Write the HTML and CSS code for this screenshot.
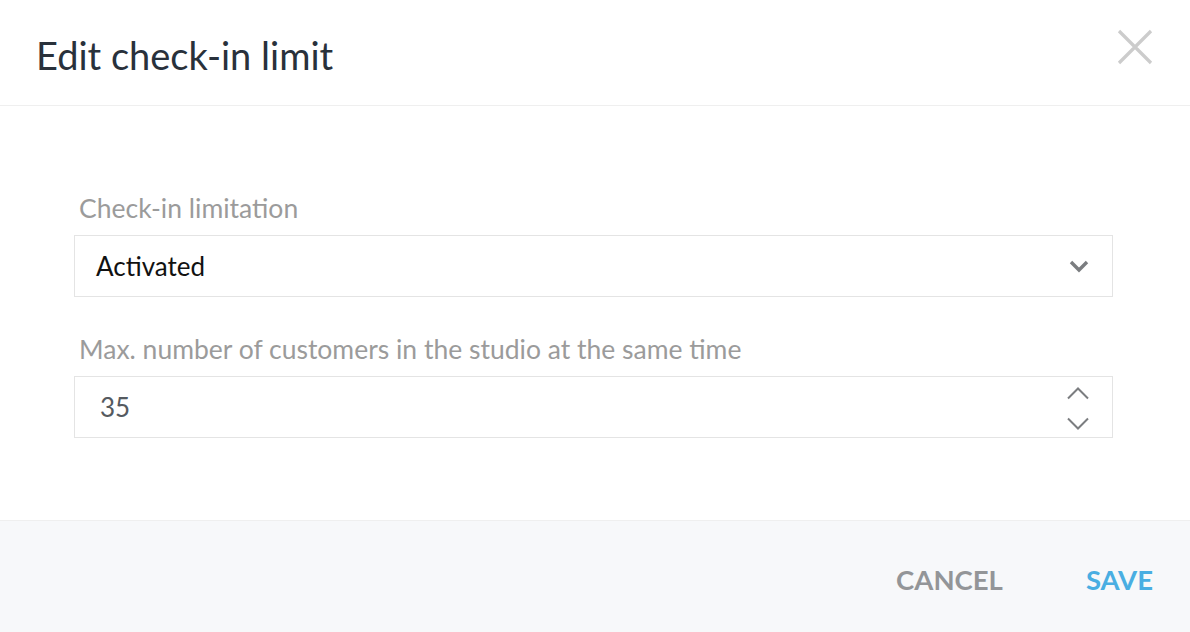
FILE: index.html
```html
<!DOCTYPE html>
<html lang="en">
<head>
    <meta charset="UTF-8">
    <meta name="viewport" content="width=device-width, initial-scale=1.0">
    <title>Edit check-in limit</title>
    <link rel="stylesheet" href="styles.css">
</head>
<body>
    <div class="modal">
        <div class="modal-header">
            <h1 class="modal-title">Edit check-in limit</h1>
            <button class="close-btn" aria-label="Close">
                <svg width="36" height="36" viewBox="0 0 36 36">
                    <path d="M2 2 L34 34 M34 2 L2 34" stroke="#cccccc" stroke-width="3.2" fill="none"/>
                </svg>
            </button>
        </div>

        <div class="modal-body">
            <div class="field">
                <div class="field-label">Check-in limitation</div>
                <div class="field-box">
                    <span class="select-value">Activated</span>
                    <svg class="chevron" width="20" height="14" viewBox="0 0 20 14">
                        <path d="M2 3 L10 11 L18 3" stroke="#7b7d80" stroke-width="3.4" fill="none"/>
                    </svg>
                </div>
            </div>
            <div class="field">
                <div class="field-label">Max. number of customers in the studio at the same time</div>
                <div class="field-box">
                    <span class="number-value">35</span>
                    <div class="spinner">
                        <svg width="22" height="14" viewBox="0 0 22 14">
                            <path d="M1 12.5 L11 2.5 L21 12.5" stroke="#7b7d80" stroke-width="2" fill="none"/>
                        </svg>
                        <svg width="22" height="14" viewBox="0 0 22 14">
                            <path d="M1 1.5 L11 11.5 L21 1.5" stroke="#7b7d80" stroke-width="2" fill="none"/>
                        </svg>
                    </div>
                </div>
            </div>
        </div>

        <div class="modal-footer">
            <button class="btn btn-cancel">CANCEL</button>
            <button class="btn btn-save">SAVE</button>
        </div>
    </div>
</body>
</html>
```

FILE: styles.css
```css
html, body {
    margin: 0;
    background-color: #fff;
    font-family: Lato, "Open Sans", sans-serif;
}

.modal {
    display: flex;
    flex-direction: column;
    height: 632px;
}

.modal-header {
    display: flex;
    align-items: center;
    justify-content: space-between;
    height: 105px;
    padding: 0 37px 0 36px;
    border-bottom: 1px solid #efefef;
}

.modal-title {
    margin: 4px 0 0 0;
    font-size: 38px;
    font-weight: 400;
    color: #29313b;
}

.close-btn {
    background: none;
    border: 0;
    padding: 0;
    margin-top: -12px;
    cursor: pointer;
}

.close-btn svg {
    display: block;
}

.modal-body {
    flex: 1;
    padding: 86px 77px 0 74px;
}

.field {
    margin-bottom: 36px;
}

.field-label {
    font-size: 26.5px;
    color: #9b9b9b;
    padding-left: 5px;
    margin-bottom: 11px;
}

.field-box {
    display: flex;
    align-items: center;
    justify-content: space-between;
    height: 60px;
    border: 1px solid #e4e4e4;
    padding: 0 23px 0 21px;
}

.select-value {
    font-size: 26px;
    color: #111;
}

.number-value {
    font-size: 26px;
    color: #555a60;
    padding-left: 4px;
}

.chevron {
    display: block;
}

.spinner {
    display: flex;
    flex-direction: column;
    gap: 17px;
    margin-top: 3px;
}

.spinner svg {
    display: block;
}

.modal-footer {
    display: flex;
    justify-content: flex-end;
    align-items: center;
    gap: 83px;
    height: 105px;
    padding: 6px 37px 0 37px;
    background: #f7f8fa;
    border-top: 1px solid #efefef;
}

.btn {
    background: none;
    border: 0;
    padding: 0;
    font-family: Lato, "Open Sans", sans-serif;
    font-size: 27.5px;
    font-weight: 700;
    cursor: pointer;
}

.btn-cancel {
    color: #939598;
}

.btn-save {
    color: #49aee2;
}
```
